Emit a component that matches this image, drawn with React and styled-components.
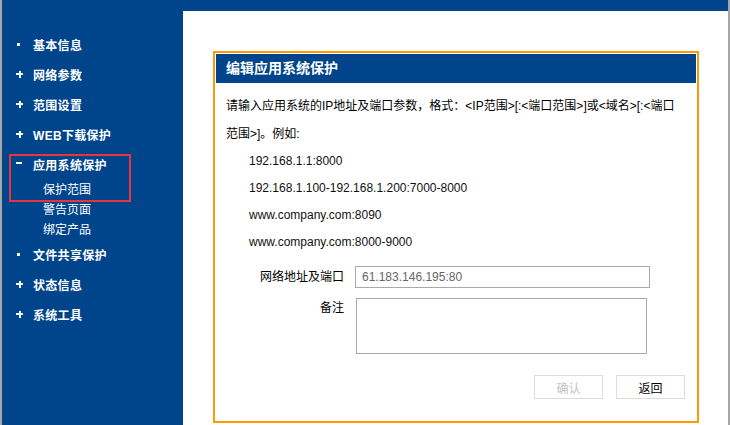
import React from "react";
import styled, { createGlobalStyle, css } from "styled-components";

const BLUE = "#00458b";

const Global = createGlobalStyle`
  html, body { margin: 0; padding: 0; background: #fff; }
  body { font-family: "Liberation Sans", "Noto Sans CJK SC", sans-serif; font-size: 12px; color: #000; }
  * { box-sizing: border-box; }
`;

const Page = styled.div`
  display: flex;
  width: 730px;
  height: 425px;
  border-left: 2px solid #a6a6a6;
  border-right: 2px solid #a6a6a6;
  overflow: hidden;
`;

const Sidebar = styled.nav`
  position: relative;
  width: 181px;
  flex: none;
  background: ${BLUE};
  padding-top: 29px;
  color: #fff;
`;

const MenuItem = styled.div`
  display: flex;
  align-items: center;
  height: 30px;
  font-weight: bold;
  font-size: 12px;
  letter-spacing: 0.3px;
`;

const markerStyles = {
  dot: css`
    &::before {
      content: "";
      position: absolute;
      left: 1px;
      top: -1px;
      width: 3px;
      height: 3px;
      background: #fff;
    }
  `,
  plus: css`
    &::before {
      content: "";
      position: absolute;
      left: 0;
      top: -1px;
      width: 7px;
      height: 2px;
      background: #fff;
    }
    &::after {
      content: "";
      position: absolute;
      left: 2.5px;
      top: -3.5px;
      width: 2px;
      height: 7px;
      background: #fff;
    }
  `,
  minus: css`
    &::before {
      content: "";
      position: absolute;
      left: 0;
      top: -2px;
      width: 6px;
      height: 2px;
      background: #fff;
    }
  `,
};

const Marker = styled.span`
  position: relative;
  display: inline-block;
  width: 17px;
  height: 0;
  margin-left: 14px;
  ${(p) => markerStyles[p.$type]}
`;

const SubItem = styled.div`
  height: 20px;
  line-height: 20px;
  padding-left: 41px;
  font-size: 12px;
`;

const SubList = styled.div`
  padding-top: 1px;
  margin-bottom: -1px;
`;

const Highlight = styled.div`
  position: absolute;
  left: 7px;
  top: 154px;
  width: 122px;
  height: 48px;
  border: 2px solid #e8353c;
  pointer-events: none;
`;

const Main = styled.main`
  flex: 1;
  display: flex;
  flex-direction: column;
`;

const TopBar = styled.div`
  height: 11px;
  background: ${BLUE};
  flex: none;
`;

const Content = styled.div`
  padding: 40px 29px 0 30px;
`;

const Panel = styled.section`
  width: 486px;
  height: 372px;
  border: 2px solid #fb9a06;
  padding: 1px;
`;

const PanelHeader = styled.h2`
  margin: 0;
  height: 29px;
  line-height: 29px;
  background: ${BLUE};
  color: #fff;
  font-size: 14px;
  font-weight: bold;
  padding-left: 10px;
`;

const PanelBody = styled.div`
  padding: 9px 11px 0 10px;
`;

const Intro = styled.p`
  margin: 0;
  line-height: 28px;
  font-size: 12px;
  color: #000;
`;

const Examples = styled.div`
  padding-left: 23px;
`;

const Example = styled.div`
  line-height: 27px;
  font-size: 12px;
  color: #111;
`;

const Form = styled.div`
  margin-top: 10px;
  display: flex;
  flex-direction: column;
  gap: 10px;
`;

const Row = styled.div`
  display: flex;
  align-items: ${(p) => (p.$top ? "flex-start" : "center")};
`;

const Label = styled.label`
  width: 118px;
  margin-right: 11px;
  text-align: right;
  font-size: 12px;
  line-height: 20px;
  color: #000;
`;

const TextInput = styled.input`
  width: 295px;
  height: 22px;
  border: 1px solid #a9a9a9;
  padding: 0 6px;
  font-family: "Liberation Sans", sans-serif;
  font-size: 12px;
  color: #666;
  outline: none;
`;

const TextArea = styled.textarea`
  width: 291px;
  height: 56px;
  margin-left: 1px;
  border: 1px solid #a9a9a9;
  resize: none;
  outline: none;
  font-family: "Liberation Sans", sans-serif;
  font-size: 12px;
`;

const Actions = styled.div`
  margin-top: 21px;
  display: flex;
  justify-content: flex-end;
  gap: 13px;
`;

const Button = styled.button`
  width: 69px;
  height: 24px;
  background: #fff;
  border: 1px solid #dcdcdc;
  font-family: "Liberation Sans", "Noto Sans CJK SC", sans-serif;
  font-size: 12px;
  color: #000;
  padding: 0;
  &:disabled {
    color: #c4c4c4;
  }
`;

const menu = [
  { label: "基本信息", type: "dot" },
  { label: "网络参数", type: "plus" },
  { label: "范围设置", type: "plus" },
  { label: "WEB下载保护", type: "plus" },
  { label: "应用系统保护", type: "minus", children: ["保护范围", "警告页面", "绑定产品"] },
  { label: "文件共享保护", type: "dot" },
  { label: "状态信息", type: "plus" },
  { label: "系统工具", type: "plus" },
];

const examples = [
  "192.168.1.1:8000",
  "192.168.1.100-192.168.1.200:7000-8000",
  "www.company.com:8090",
  "www.company.com:8000-9000",
];

export default function App() {
  return (
    <>
      <Global />
      <Page>
        <Sidebar>
          {menu.map((m) => (
            <React.Fragment key={m.label}>
              <MenuItem>
                <Marker $type={m.type} />
                {m.label}
              </MenuItem>
              {m.children && (
                <SubList>
                  {m.children.map((c) => (
                    <SubItem key={c}>{c}</SubItem>
                  ))}
                </SubList>
              )}
            </React.Fragment>
          ))}
          <Highlight />
        </Sidebar>
        <Main>
          <TopBar />
          <Content>
            <Panel>
              <PanelHeader>编辑应用系统保护</PanelHeader>
              <PanelBody>
                <Intro>
                  请输入应用系统的IP地址及端口参数，格式：&lt;IP范围&gt;[:&lt;端口范围&gt;]或&lt;域名&gt;[:&lt;端口
                  <br />
                  范围&gt;]。例如:
                </Intro>
                <Examples>
                  {examples.map((e) => (
                    <Example key={e}>{e}</Example>
                  ))}
                </Examples>
                <Form>
                  <Row>
                    <Label>网络地址及端口</Label>
                    <TextInput defaultValue="61.183.146.195:80" />
                  </Row>
                  <Row $top>
                    <Label>备注</Label>
                    <TextArea />
                  </Row>
                </Form>
                <Actions>
                  <Button disabled>确认</Button>
                  <Button>返回</Button>
                </Actions>
              </PanelBody>
            </Panel>
          </Content>
        </Main>
      </Page>
    </>
  );
}
